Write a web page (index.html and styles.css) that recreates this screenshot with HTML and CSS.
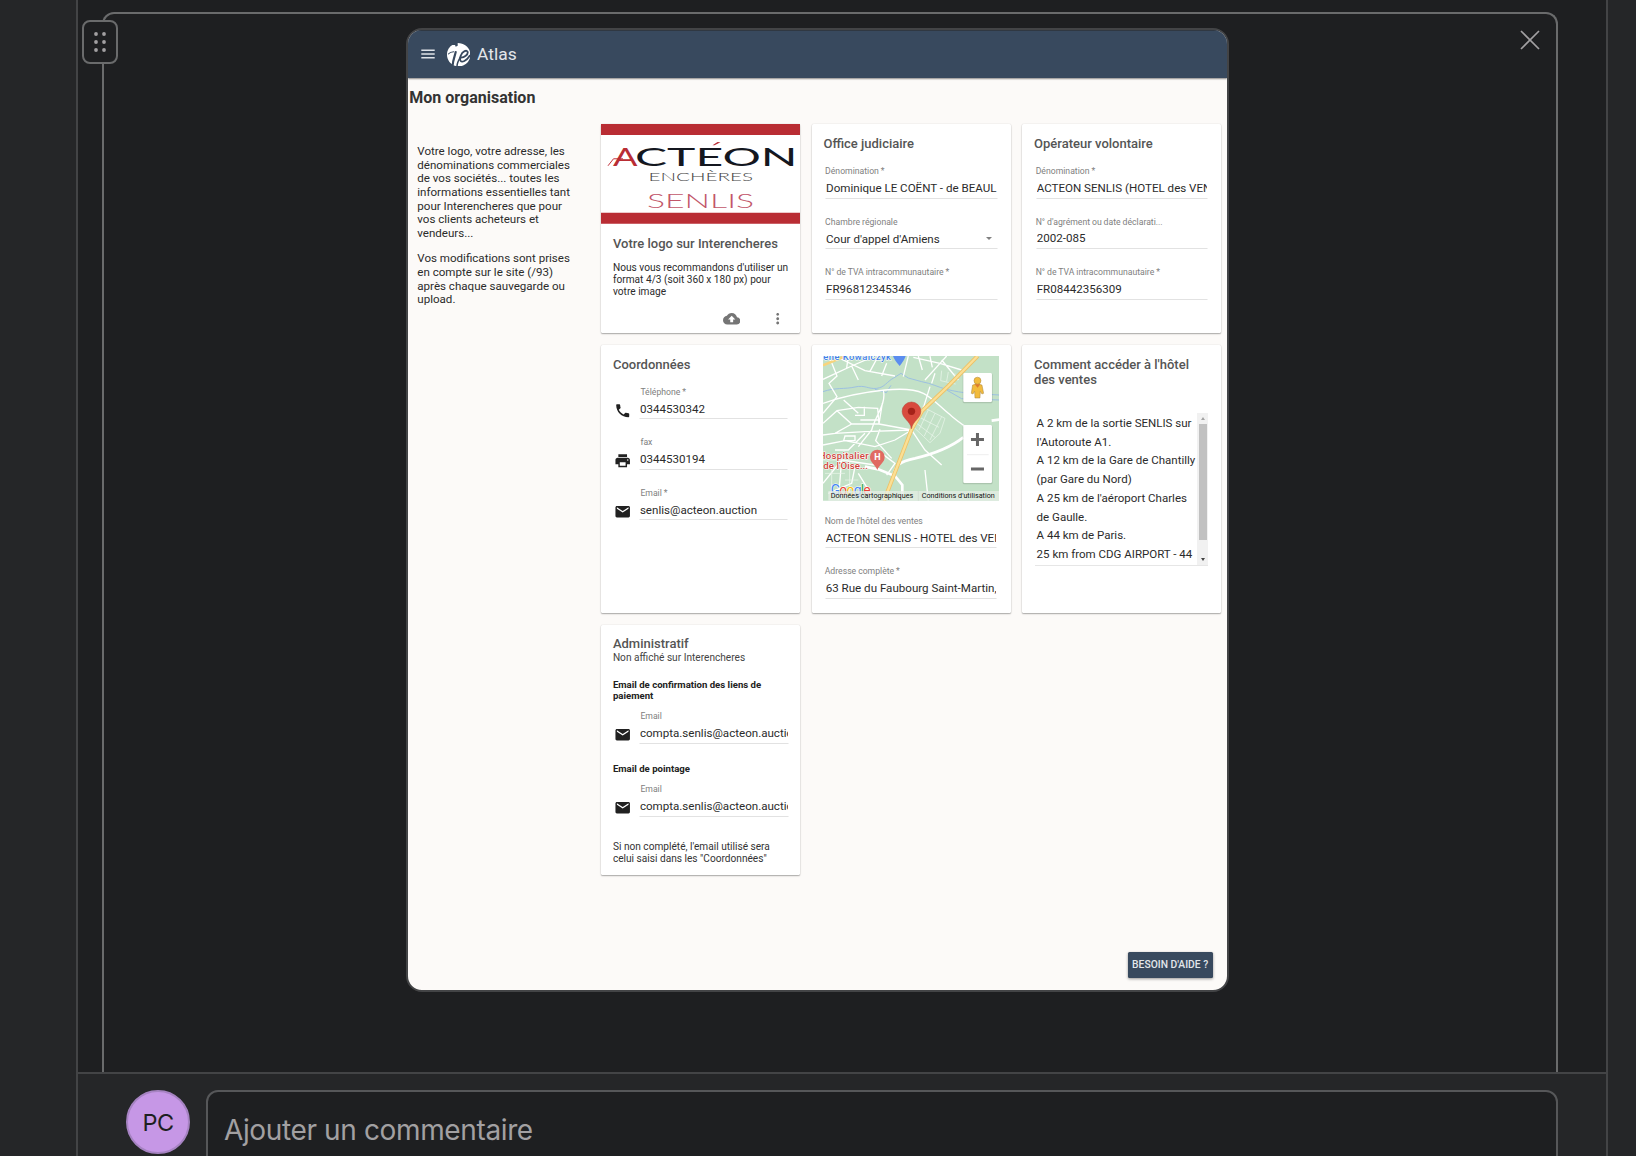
FILE: index.html
```
<!DOCTYPE html>
<html lang="fr">
<head>
<meta charset="utf-8">
<title>Atlas – Mon organisation</title>
<link rel="stylesheet" href="styles.css">
</head>
<body>
<svg width="0" height="0" class="sprite" aria-hidden="true">
  <symbol id="mail" viewBox="0 0 24 24"><path d="M20 4H4c-1.1 0-2 .9-2 2v12c0 1.1.9 2 2 2h16c1.100 0 2-.9 2-2V6c0-1.100-.9-2-2-2zm0 4l-8 5-8-5V6l8 5 8-5v2z"/></symbol>
  <symbol id="phone" viewBox="0 0 24 24"><path d="M6.620 10.790c1.440 2.830 3.760 5.140 6.590 6.590l2.200-2.200c.27-.27.67-.36 1.020-.24 1.120.37 2.330.57 3.570.57.55 0 1 .45 1 1V20c0 .55-.45 1-1 1-9.390 0-17-7.610-17-17 0-.55.45-1 1-1h3.500c.55 0 1 .45 1 1 0 1.250.2 2.450.57 3.570.11.35.03.74-.25 1.020l-2.200 2.200z"/></symbol>
  <symbol id="print" viewBox="0 0 24 24"><path d="M19 8H5c-1.660 0-3 1.340-3 3v6h4v4h12v-4h4v-6c0-1.660-1.340-3-3-3zm-3 11H8v-5h8v5zm3-7c-.55 0-1-.45-1-1s.45-1 1-1 1 .45 1 1-.45 1-1 1zm-1-9H6v4h12V3z"/></symbol>
</svg>

<main class="panel">
  <section class="viewer">
    <div class="frame">
      <button class="handle" aria-label="Déplacer">
        <svg width="12" height="20" viewBox="0 0 12 20" fill="#a2a0a2"><circle cx="2" cy="2" r="1.900"/><circle cx="10" cy="2" r="1.900"/><circle cx="2" cy="10" r="1.900"/><circle cx="10" cy="10" r="1.900"/><circle cx="2" cy="18" r="1.900"/><circle cx="10" cy="18" r="1.900"/></svg>
      </button>
      <button class="close" aria-label="Fermer">
        <svg width="20" height="20" viewBox="0 0 20 20" stroke="#a2a0a2" stroke-width="1.700"><path d="M1 1l18 18M19 1L1 19"/></svg>
      </button>

      <div class="shot">
        <header class="topbar">
          <svg class="burger" width="14" height="10" viewBox="0 0 14 10" fill="#dfe3e8"><path d="M.3.400h13.400v1.500H.3zM.3 4.200h13.400v1.500H.3zM.3 8h13.400v1.500H.3z"/></svg>
          <svg class="brand" width="23.400" height="23.400" viewBox="0 0 70 70">
            <path fill="#fff" d="M24 6l2 5 6-3V0C54 0 70 15 70 35S54 70 35 70 0 54 0 35C0 22 7 11 16 6z"/>
            <g fill="none" stroke="#38495e" stroke-linecap="round">
              <path stroke-width="3" d="M4 33C8 28 13 26 20 26"/>
              <path stroke-width="6.500" d="M26 27C24 38 18 50 17 66"/>
              <path stroke-width="5.500" d="M42 44C52 43 63 35 62 27 60 19 46 24 41 38 36 54 42 59 52 54 58 51 63 46 68 38"/>
              <path stroke-width="4.500" d="M40 42C34 52 30 60 30 69"/>
            </g>
          </svg>
          <span class="app">Atlas</span>
        </header>
        <h1>Mon organisation</h1>

        <div class="layout">
          <aside class="intro">
            <p>Votre logo, votre adresse, les dénominations commerciales de vos sociétés... toutes les informations essentielles tant pour Interencheres que pour vos clients acheteurs et vendeurs...</p>
            <p>Vos modifications sont prises en compte sur le site (/93) après chaque sauvegarde ou upload.</p>
          </aside>

          <div class="cards">
            <article class="card media-card">
              <svg class="logo" viewBox="0 0 199.300 99.700" preserveAspectRatio="none">
                <path fill="#fff" d="M0 0h199.300v99.700H0z"/>
                <path fill="#b92d34" d="M0 0h199.300v10.900H0zM0 88.800h199.300v10.900H0z"/>
                <path fill="none" stroke="#c2303a" stroke-width="1" d="M7 41.800L12.500 34.800H22"/>
                <g font-family="Lato, sans-serif">
                  <g font-size="25">
                    <text x="12" y="42" textLength="24.500" lengthAdjust="spacingAndGlyphs" fill="#b92d34">A</text>
                    <text x="34" y="42" textLength="162.500" lengthAdjust="spacingAndGlyphs" fill="#14171f">CTEON</text>
                  </g>
                  <path fill="#b92d34" d="M111.500 21.300l5-3.300 3 .2-6 3.100z"/>
                  <text x="47.500" y="57" font-size="12" font-weight="300" textLength="104.500" lengthAdjust="spacingAndGlyphs" fill="#444">ENCHÈRES</text>
                  <text x="46" y="83.800" font-size="20.500" font-weight="300" textLength="107" lengthAdjust="spacingAndGlyphs" fill="#c2566a">SENLIS</text>
                </g>
              </svg>
              <div class="body">
                <h2>Votre logo sur Interencheres</h2>
                <p class="text">Nous vous recommandons d'utiliser un format 4/3 (soit 360 x 180 px) pour votre image</p>
                <div class="actions">
                  <svg width="17.400" height="17.400" viewBox="0 0 24 24"><path d="M19.350 10.040C18.670 6.590 15.640 4 12 4 9.110 4 6.600 5.640 5.350 8.040 2.340 8.360 0 10.910 0 14c0 3.310 2.690 6 6 6h13c2.760 0 5-2.240 5-5 0-2.640-2.050-4.780-4.650-4.960zM14 13v4h-4v-4H7l5-5 5 5h-3z"/></svg>
                  <svg width="17.400" height="17.400" viewBox="0 0 24 24"><path d="M12 8c1.100 0 2-.9 2-2s-.9-2-2-2-2 .9-2 2 .9 2 2 2zm0 2c-1.100 0-2 .9-2 2s.9 2 2 2 2-.9 2-2-.9-2-2-2zm0 6c-1.100 0-2 .9-2 2s.9 2 2 2 2-.9 2-2-.9-2-2-2z"/></svg>
                </div>
              </div>
            </article>

            <article class="card">
              <h2>Office judiciaire</h2>
              <div class="fields">
                <div class="field"><label>Dénomination *</label><div class="value">Dominique LE COËNT - de BEAUL</div></div>
                <div class="field"><label>Chambre régionale</label><div class="value select">Cour d'appel d'Amiens<i class="caret"></i></div></div>
                <div class="field"><label>N° de TVA intracommunautaire *</label><div class="value">FR96812345346</div></div>
              </div>
            </article>

            <article class="card">
              <h2>Opérateur volontaire</h2>
              <div class="fields">
                <div class="field"><label>Dénomination *</label><div class="value">ACTEON SENLIS (HOTEL des VEN</div></div>
                <div class="field"><label>N° d'agrément ou date déclarati...</label><div class="value">2002-085</div></div>
                <div class="field"><label>N° de TVA intracommunautaire *</label><div class="value">FR08442356309</div></div>
              </div>
            </article>

            <article class="card">
              <h2>Coordonnées</h2>
              <div class="fields with-icons">
                <div class="row"><svg class="icon"><use href="#phone"/></svg><div class="field"><label>Téléphone *</label><div class="value">0344530342</div></div></div>
                <div class="row"><svg class="icon"><use href="#print"/></svg><div class="field"><label>fax</label><div class="value">0344530194</div></div></div>
                <div class="row"><svg class="icon"><use href="#mail"/></svg><div class="field"><label>Email *</label><div class="value">senlis@acteon.auction</div></div></div>
              </div>
            </article>

            <article class="card map-card">
              <svg class="map" viewBox="24 18 529 434" preserveAspectRatio="none" font-family="Roboto, sans-serif">
                <path fill="#c3e1c7" d="M24 18h529v434H24z"/>
                <g fill="none" stroke="#94b9e6" stroke-width="2.500">
                  <path d="M24 125C60 112 90 118 120 111S160 118 185 115 215 95 236 84L258 70 280 84 320 95C350 100 370 112 395 118S440 128 470 130L553 135"/>
                  <path d="M180 118L214 128 228 106M395 120L440 146 553 150"/>
                </g>
                <g fill="none" stroke="#fff" stroke-width="4">
                  <path d="M24 88L110 48 180 18M60 18L150 62 240 78M100 18L95 54M42 18L66 78 42 100 66 140 24 190M110 48L130 90M190 18L165 64M215 40L200 78M280 18L265 80M295 22L375 40 440 60M310 18L322 60M345 18L352 52M330 90L375 40 395 18M380 30L430 90M360 70L350 100"/>
                  <path d="M24 160C80 140 150 126 210 120S300 118 325 130 370 165 400 190 440 225 470 240"/>
                  <path d="M24 220L66 182 130 172 188 175 192 222H110L66 182M110 222L60 250 24 255M86 150L130 190M120 196h28v-26M136 210h54M192 222L202 160M205 122C215 160 180 200 170 240L130 290M192 222L290 240M60 250L150 245 290 240M90 258h30v14h-34zM24 285L90 272 180 290 240 270 290 240M195 238L182 272 230 325M150 250L100 300 60 300M290 240L320 190 345 110M290 240L330 300 380 345"/>
                  <path d="M330 360L340 452M24 400L80 330 180 345M80 330L70 450M120 350L110 400 40 430M130 370L180 452M200 310L240 340 215 375"/>
                </g>
                <g fill="none" stroke="#e9f5ea" stroke-width="2.200">
                  <path d="M322 170L390 205 375 250 345 278 300 235M310 200L372 232M305 220L360 262M340 180L312 240M360 190L328 258M380 200L345 270M380 62l-3 30 45 10M400 66l-5 28M420 70l-2 26M24 330h80v100M50 345v80M30 370h60M90 390h40"/>
                </g>
                <path fill="none" stroke="#fff" stroke-width="8" d="M150 350L190 358 240 378 262 405V440M235 378C240 345 255 334 300 325 370 308 410 290 445 262M530 212L553 209"/>
                <g fill="none"><path stroke="#edc266" stroke-width="12" d="M207 452L290 238 322 182 400 108 488 18"/><path stroke="#fbdf95" stroke-width="7" d="M207 452L290 238 322 182 400 108 488 18"/><path stroke="#f7d47c" stroke-width="8" d="M24 46L92 18"/></g>
                <path fill="#5b8def" d="M234 18h38q-2 10-18 30-16-18-20-30z"/>
                <g stroke="#fff" stroke-width="3" paint-order="stroke">
                  <text x="25" y="29" font-size="28" font-weight="500" fill="#3f7fe8" textLength="203">ene Kowalczyk</text>
                  <text x="11" y="327" font-size="29" font-weight="500" fill="#d1453b" textLength="150">Hospitalier</text>
                  <text x="25" y="357" font-size="29" font-weight="500" fill="#d1453b" textLength="134">de l'Oise...</text>
                  <text x="47" y="436" font-size="42" fill="#4285f4" textLength="120"><tspan>G</tspan><tspan fill="#ea4335">o</tspan><tspan fill="#fbbc05">o</tspan><tspan>g</tspan><tspan fill="#34a853">l</tspan><tspan fill="#ea4335">e</tspan></text>
                </g>
                <path fill="#e06a62" d="M187 299a22 22 0 0 1 22 22c0 17-16 22-22 39-6-17-22-22-22-39a22 22 0 0 1 22-22z"/>
                <text x="187" y="331" font-size="27" font-weight="700" fill="#fff" text-anchor="middle">H</text>
                <path fill="#d84b3e" stroke="#b63a30" stroke-width="1.500" d="M289.500 156a28 28 0 0 1 28 28c0 22-24 28-28 52-4-24-28-30-28-52a28 28 0 0 1 28-28z"/>
                <circle cx="289.500" cy="184" r="11" fill="#a52219"/>
                <path fill="#e5eee5" fill-opacity=".75" d="M40 423h513v29H40z"/>
                <path stroke="#cbd6cc" stroke-width="2" d="M310 423v29"/>
                <g font-size="22.500" fill="#111">
                  <text x="47" y="443" textLength="248" lengthAdjust="spacingAndGlyphs">Données cartographiques</text>
                  <text x="320.500" y="443" textLength="219" lengthAdjust="spacingAndGlyphs">Conditions d'utilisation</text>
                </g>
                <g fill="#000" fill-opacity=".12"><rect x="443" y="70" width="90" height="90" rx="5"/><rect x="443" y="226" width="90" height="177" rx="5"/></g>
                <g fill="#fff"><rect x="445" y="69" width="86" height="87" rx="4"/><rect x="445" y="225" width="86" height="174" rx="4"/></g>
                <g fill="#f2bb3c" stroke="#a8843c" stroke-width="1.500"><path d="M473 105q14-6 28 0l5 25-5 2-5-8-1 20h-15l-1-20-5 8-5-2z"/><circle cx="487.500" cy="92" r="10.500"/></g>
                <path fill="#dd7a2e" d="M479 103h17l-8 10z"/>
                <path stroke="#e6e6e6" stroke-width="2" d="M456 314h65"/>
                <path stroke="#666" stroke-width="9" fill="none" d="M468 268.500h39M487.500 249v39M468 357h39"/>
              </svg>
              <div class="fields">
                <div class="field"><label>Nom de l'hôtel des ventes</label><div class="value">ACTEON SENLIS - HOTEL des VEN</div></div>
                <div class="field"><label>Adresse complète *</label><div class="value">63 Rue du Faubourg Saint-Martin,</div></div>
              </div>
            </article>

            <article class="card">
              <h2>Comment accéder à l'hôtel des ventes</h2>
              <div class="textarea">
                <div class="lines">A 2 km de la sortie SENLIS sur<br>l'Autoroute A1.<br>A 12 km de la Gare de Chantilly<br>(par Gare du Nord)<br>A 25 km de l'aéroport Charles<br>de Gaulle.<br>A 44 km de Paris.<br>25 km from CDG AIRPORT - 44</div>
                <div class="scroll"><i class="up"></i><span class="thumb"></span><i class="down"></i></div>
              </div>
            </article>

            <article class="card admin">
              <h2>Administratif</h2>
              <p class="sub">Non affiché sur Interencheres</p>
              <h3>Email de confirmation des liens de paiement</h3>
              <div class="row"><svg class="icon"><use href="#mail"/></svg><div class="field"><label>Email</label><div class="value">compta.senlis@acteon.auctio</div></div></div>
              <h3>Email de pointage</h3>
              <div class="row"><svg class="icon"><use href="#mail"/></svg><div class="field"><label>Email</label><div class="value">compta.senlis@acteon.auctio</div></div></div>
              <p class="note">Si non complété, l'email utilisé sera celui saisi dans les "Coordonnées"</p>
            </article>
          </div>
        </div>
        <button class="help">BESOIN D'AIDE ?</button>
      </div>
    </div>
  </section>

  <footer class="composer">
    <div class="avatar">PC</div>
    <div class="input">Ajouter un commentaire</div>
  </footer>
</main>
</body>
</html>
```
FILE: styles.css
```
* { box-sizing: border-box; }
body {
  margin: 0;
  height: 1156px;
  overflow: hidden;
  display: flex;
  justify-content: center;
  padding: 0 28px 0 76px;
  background: #252628;
  font-family: Roboto, sans-serif;
}
button { border: 0; padding: 0; background: none; font-family: inherit; }
h1, h2, h3, p { margin: 0; }
svg { display: block; flex: none; }
.sprite { position: absolute; }

.panel {
  width: 1532px;
  height: 1156px;
  display: flex;
  flex-direction: column;
  border: solid #434446;
  border-width: 0 2px;
  background: #1e1f21;
}
.viewer { height: 1072px; flex: none; padding: 12px 48px 0 24px; }
.frame {
  position: relative;
  height: 1060px;
  border: 2px solid #6a6b6c;
  border-bottom: 0;
  border-radius: 12px 12px 0 0;
  padding: 14px 0 0 302px;
}
.handle {
  position: absolute;
  left: -22px;
  top: 6px;
  width: 36px;
  height: 44px;
  display: grid;
  place-items: center;
  border: 2px solid #6a6b6c;
  border-radius: 8px;
  background: #1e1f21;
}
.close { position: absolute; right: 16px; top: 16px; }

.shot {
  width: 823px;
  height: 964px;
  display: flex;
  flex-direction: column;
  border: 2px solid #434446;
  border-radius: 16px;
  overflow: hidden;
  background: #fcfaf8;
  color: #2b2b2b;
}
.topbar {
  height: 47.500px;
  flex: none;
  display: flex;
  align-items: center;
  padding: 0 0 0 13px;
  border-top: 1.500px solid #303842;
  background: #38495e;
  box-shadow: 0 1px 1.500px rgba(0, 0, 0, .45);
}
.brand { margin-left: 11.700px; }
.app { margin-left: 7px; font-size: 17.400px; color: #e3e6ea; }
h1 {
  margin: 11.500px 0 0 1.300px;
  font-size: 16px;
  line-height: 18px;
  font-weight: 700;
  color: #333;
}
.layout { display: flex; margin-top: 17.300px; }
.intro {
  width: 193px;
  flex: none;
  padding: 20.600px 26px 0 9.300px;
  font-size: 11.570px;
  line-height: 13.700px;
}
.intro p + p { margin-top: 11.500px; }
.cards {
  display: grid;
  grid-template-columns: repeat(3, 199.300px);
  grid-template-rows: 208.700px 268.600px 250px;
  gap: 11.700px 11.300px;
}
.card {
  padding: 11.900px 12px 0 11.900px;
  border-radius: 1.500px;
  background: #fff;
  box-shadow: 0 1px 1.500px rgba(0, 0, 0, .32), 0 0 1.500px rgba(0, 0, 0, .12);
}
h2 { font-size: 13px; line-height: 15.300px; font-weight: 500; color: #555; }

.media-card { padding: 0; }
.logo { width: 199.300px; height: 99.700px; }
.body { padding: 11.900px 8px 0 12px; }
.text { margin-top: 11.300px; font-size: 10.150px; line-height: 11.600px; }
.actions { display: flex; justify-content: flex-end; gap: 28.500px; margin-top: 13.200px; padding-right: 6.300px; fill: #757575; }

.fields { margin: 14.700px 0 0 1.600px; width: 172.800px; }
.field { height: 50.500px; }
.field label {
  display: block;
  font-size: 8.660px;
  line-height: 10px;
  color: #808080;
  white-space: nowrap;
  word-spacing: -.2px;
}
.value {
  height: 22.500px;
  padding-top: 4.700px;
  border-bottom: 1px solid #e2e2e2;
  font-size: 11.580px;
  line-height: 14px;
  color: #2b2b2b;
  white-space: nowrap;
  overflow: hidden;
  border-left: 1.200px solid transparent;
  border-right: 1.300px solid transparent;
}
.select { display: flex; justify-content: space-between; padding: 5.500px 5px 0 0; }
.caret { margin-top: 5.300px; width: 0; height: 0; border: solid transparent; border-width: 3.200px 3px 0; border-top-color: #808080; }

.with-icons { margin: 15px 0 0; width: auto; }
.row { display: flex; padding-left: 1px; }
.icon { width: 17.400px; height: 17.400px; margin: 15px 7.600px 0 0; fill: #212121; }
.row .field { width: 150px; }
.row .field label { padding-left: 1.500px; }

.map-card { padding: 11.500px 0 0 11.300px; }
.map { width: 176.300px; height: 144.700px; }
.map-card .fields { margin: 15px 0 0 1.800px; }

.textarea {
  display: flex;
  margin: 25.500px 0 0 1px;
  width: 173px;
  height: 153.300px;
  border-bottom: 1px solid #e6e6e6;
}
.lines {
  flex: 1;
  padding: 1.300px 0 0 1.500px;
  font-size: 11.530px;
  line-height: 18.730px;
  white-space: nowrap;
}
.scroll {
  width: 10.600px;
  display: flex;
  flex-direction: column;
  align-items: center;
  background: #f1f1f1;
}
.thumb { width: 8px; height: 116.500px; margin: 4px 0 18px; background: #c1c1c1; }
.up, .down { width: 0; height: 0; border: solid transparent; }
.up { margin-top: 4px; border-width: 0 2.700px 3px; border-bottom-color: #a3a3a3; }
.down { border-width: 3px 2.700px 0; border-top-color: #444; }

.admin { padding-top: 11.300px; }
.sub { font-size: 10.150px; line-height: 11.500px; color: #444; }
h3 { margin: 17.400px 0 9.300px; font-size: 9.600px; line-height: 10.800px; font-weight: 700; color: #222; }
.admin .field { height: 32.500px; }
.row + h3 { margin-top: 20.200px; }
.note { margin-top: 24.500px; font-size: 10.150px; line-height: 11.700px; color: #333; }

.help {
  width: 85.300px;
  height: 26px;
  margin: auto 14.200px 12px auto;
  padding-bottom: 1px;
  border-radius: 1.500px;
  background: #38495e;
  box-shadow: 0 1px 3px rgba(0, 0, 0, .4);
  color: #e3e6ea;
  font-size: 10.300px;
  font-weight: 500;
}

.composer {
  flex: 1;
  display: flex;
  align-items: flex-start;
  padding: 16px 48px 0 48px;
  border-top: 2px solid #434446;
  background: #252628;
}
.avatar {
  width: 64px;
  height: 64px;
  flex: none;
  display: grid;
  place-items: center;
  border: 2px solid #a683c2;
  border-radius: 50%;
  background: #c697e6;
  color: #1e1f21;
  font: 23.500px Inter, sans-serif;
  letter-spacing: -.6px;
}
.input {
  flex: 1;
  height: 120px;
  margin-left: 16px;
  padding: 21px 16px;
  border: 2px solid #565759;
  border-radius: 12px;
  background: #1e1f21;
  color: #a2a0a2;
  font: 28px/34px Inter, sans-serif;
  letter-spacing: -.37px;
}
```
